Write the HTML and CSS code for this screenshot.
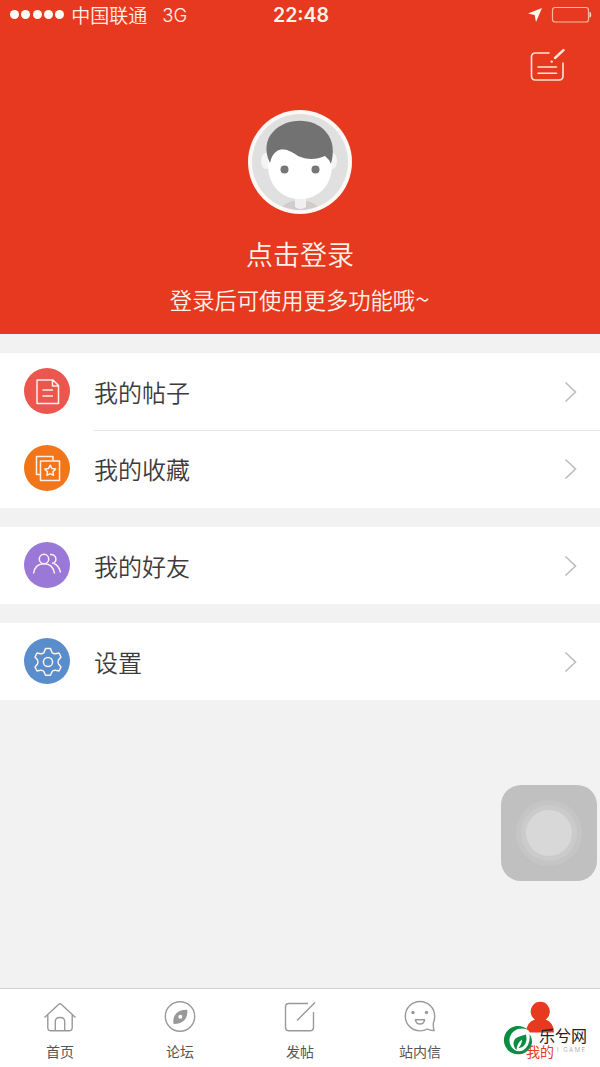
FILE: index.html
```html
<!DOCTYPE html>
<html lang="zh-CN">
<head>
    <meta charset="UTF-8">
    <meta name="viewport" content="width=device-width, initial-scale=1.0">
    <title>我的</title>
    <link rel="stylesheet" href="styles.css">
</head>
<body>

<div class="app">
    <header class="header">
        <div class="status-bar">
            <div class="status-left">
                <div class="signal"><i></i><i></i><i></i><i></i><i></i></div>
                <span class="carrier">中国联通</span>
                <span class="network">3G</span>
            </div>
            <span class="time">22:48</span>
            <div class="status-right">
                <svg width="16" height="16" viewBox="0 0 16 16"><path d="M15 1L9 15L7.6 8L1 6.6Z" fill="#fff8ee"/></svg>
                <svg width="42" height="18" viewBox="0 0 42 18">
                    <rect x="2.5" y="1.5" width="36" height="14.5" rx="2.5" fill="none" stroke="#fcb9a2" stroke-width="1.2"/>
                    <path d="M39.5 6h1q1.5 2.7 0 5.5h-1z" fill="#fddccb"/>
                </svg>
            </div>
        </div>

        <div class="toolbar">
            <svg width="38" height="36" viewBox="0 0 38 36" fill="none" stroke="#ffe5d6" stroke-width="1.6" stroke-linecap="round">
                <path d="M20 5H6.5Q2.500 5 2.500 9V28Q2.500 32 6.500 32H30Q34 32 34 28V15"/>
                <path d="M9 19H27.500M9 25.300H27.500"/>
                <path d="M26 10L34.500 2.200" stroke-width="2.500"/>
                <circle cx="22.700" cy="13.600" r="1.200" fill="#ffe5d6" stroke="none"/>
            </svg>
        </div>

        <div class="avatar">
            <svg width="104" height="104" viewBox="0 0 104 104">
                <defs><clipPath id="face"><circle cx="52" cy="52" r="48"/></clipPath></defs>
                <circle cx="52" cy="52" r="52" fill="#fbf8f6"/>
                <circle cx="52" cy="52" r="48" fill="#e0e0e0"/>
                <g clip-path="url(#face)">
                    <path d="M30 104Q34 92 47 91H57Q70 92 74 104Z" fill="#d3cccc"/>
                    <path d="M47 86H58V97Q52.500 101 47 97Z" fill="#f0f0f0"/>
                    <ellipse cx="18" cy="51" rx="5" ry="8" fill="#f4f4f4"/>
                    <ellipse cx="84" cy="51" rx="5" ry="8" fill="#f4f4f4"/>
                    <path d="M20 40H84V55C84 76 70 89 52 89S20 76 20 55Z" fill="#fff"/>
                    <path d="M22 53C16 41 18 29 25 22C38 7 66 7 78 22C86 31 86 43 83 54Q81 49 77 46C68 50 59 50 50 46C42 41 36 37 29 41Q24 44 22 53Z" fill="#727272"/>
                    <circle cx="36.500" cy="59.500" r="4" fill="#777"/>
                    <circle cx="67.500" cy="59.500" r="4" fill="#777"/>
                </g>
            </svg>
        </div>
        <div class="login">点击登录</div>
        <div class="login-tip">登录后可使用更多功能哦<span class="tilde">~</span></div>
    </header>

    <main class="menu">
        <section class="group">
            <a class="row">
                <svg class="row-icon red" viewBox="0 0 46 46">
                    <path d="M13 12H29L34.500 17.500V35.500H13ZM28.500 12V18H34.500M18.500 22H29M18.500 28H29"/>
                </svg>
                <span class="row-label">我的帖子</span>
                <svg class="arrow" viewBox="0 0 14 22"><path d="M1.500 1.500L11.500 11L1.500 20.500"/></svg>
            </a>
            <a class="row line">
                <svg class="row-icon orange" viewBox="0 0 46 46">
                    <path d="M16.500 29.500H12.500V11.500H29V15M16.500 16H35.500V35.500H16.500Z"/>
                    <path d="M26.200 20.200L27.900 23.600L31.600 24.100L28.900 26.700L29.500 30.400L26.200 28.700L22.900 30.400L23.500 26.700L20.800 24.100L24.500 23.600Z"/>
                </svg>
                <span class="row-label">我的收藏</span>
                <svg class="arrow" viewBox="0 0 14 22"><path d="M1.500 1.500L11.500 11L1.500 20.500"/></svg>
            </a>
        </section>
        <section class="group">
            <a class="row">
                <svg class="row-icon purple" viewBox="0 0 46 46">
                    <circle cx="20" cy="17" r="4.700"/>
                    <path d="M9.500 31.500C10.500 25 14 21.700 20 21.700S29.500 25 30.500 31.500M26 12.500C33.500 11.500 33.500 21.500 28 21.300M30 21.500Q35 23.500 36.500 30.500"/>
                </svg>
                <span class="row-label">我的好友</span>
                <svg class="arrow" viewBox="0 0 14 22"><path d="M1.500 1.500L11.500 11L1.500 20.500"/></svg>
            </a>
        </section>
        <section class="group">
            <a class="row">
                <svg class="row-icon blue" viewBox="0 0 46 46">
                    <circle cx="24" cy="24" r="4.600"/>
                    <path d="M21.500 10.500H26.500L28 14.500Q30 16.500 32.500 15.500L35 15L37 19L34.500 22Q33.500 24 34.500 26L37 29L35 33L31.500 32.300Q29 32 28 33.800L26.500 37.300H21.500L20 33.800Q19 32 16.500 32.300L13 33L11 29L13.500 26Q14.500 24 13.500 22L11 19L13 15L15.500 15.500Q18 16.500 20 14.500Z"/>
                </svg>
                <span class="row-label">设置</span>
                <svg class="arrow" viewBox="0 0 14 22"><path d="M1.500 1.500L11.500 11L1.500 20.500"/></svg>
            </a>
        </section>
    </main>

    <nav class="tabs">
        <a class="tab">
            <svg class="tab-icon" viewBox="0 0 40 36">
                <path d="M4.500 18.500L18.800 5.200Q20 4.200 21.200 5.200L35.500 18.500M7.800 16V28.500Q7.800 31.800 11 31.800H29Q32.200 31.800 32.200 28.500V16M15.300 31.500V22.500Q15.300 18.500 20 18.500T24.700 22.500V31.500"/>
            </svg>
            <span>首页</span>
        </a>
        <a class="tab">
            <svg class="tab-icon" viewBox="0 0 40 36">
                <circle cx="20" cy="17.500" r="14.700"/>
                <path d="M27.300 10.800Q28 17 24.500 21T13.500 25Q12.500 18.500 16.200 14.500T27.300 10.800Z" fill="#999" stroke="none"/>
                <circle cx="20.300" cy="17.800" r="2" fill="#fff" stroke="none"/>
            </svg>
            <span>论坛</span>
        </a>
        <a class="tab">
            <svg class="tab-icon" viewBox="0 0 40 36">
                <path d="M28 4.500H9Q5.500 4.500 5.500 8V28Q5.500 31.800 9 31.800H30Q33.500 31.800 33.500 28V13M17 21.500L35 3.500"/>
            </svg>
            <span>发帖</span>
        </a>
        <a class="tab">
            <svg class="tab-icon" viewBox="0 0 40 36">
                <path d="M33.500 23.500Q34.700 20.500 34.700 17.200A14.700 14.700 0 1 0 20 31.900Q24 31.900 27.500 30Q30 31.600 34 31.500Q33 27 33.500 23.500Z"/>
                <path d="M15.500 20.800H24.500Q24 25 20 25T15.500 20.800Z"/>
                <circle cx="13" cy="13.500" r="1.700" fill="#999" stroke="none"/>
                <circle cx="26.500" cy="13.500" r="1.700" fill="#999" stroke="none"/>
            </svg>
            <span>站内信</span>
        </a>
        <a class="tab active">
            <svg class="tab-icon" viewBox="0 0 40 36">
                <path d="M15 20.500A9.600 9.600 0 1 1 25.500 20.500Q33.500 23 34 33.500H6Q6.500 23 15 20.500Z" fill="#e7391f" stroke="none"/>
            </svg>
            <span>我的</span>
        </a>
    </nav>

    <div class="assistive"><div class="ring"><div class="dot"></div></div></div>

    <div class="watermark">
        <svg width="30" height="30" viewBox="0 0 30 30">
            <circle cx="15" cy="15" r="14" fill="#fff"/>
            <path d="M25 5A14.200 14.200 0 1 0 29 18Q29 12 26.500 9Q28 20 20 25.500Q13 28 8.500 22Q4 15 9 8Q16 1 25 5Z" fill="#0b8c43"/>
            <path d="M13.500 25C9.500 21 9.500 15 14 12.500Q17 11 23 9.500Q24.500 16 21.500 20Q19 23.500 15.500 23Q19 19 19 14.500Q14 18 13.500 25Z" fill="#0b8c43"/>
        </svg>
        <div class="mark-text">
            <b>乐兮网</b>
            <small>I GAME</small>
        </div>
    </div>
</div>

</body>
</html>
```
FILE: styles.css
```css
body {
    margin: 0;
    font-family: "Noto Sans CJK SC", sans-serif;
    font-weight: 350;
    background: #f2f2f2;
}

.app {
    position: relative;
    display: flex;
    flex-direction: column;
    width: 600px;
    height: 1067px;
    overflow: hidden;
}

svg {
    display: block;
    flex-shrink: 0;
}

/* header */
.header {
    height: 334px;
    display: flex;
    flex-direction: column;
    align-items: center;
    background: #e7391f;
    color: #fff3ea;
}

.status-bar {
    display: grid;
    grid-template-columns: 1fr auto 1fr;
    align-items: center;
    width: 100%;
    height: 29px;
    box-sizing: border-box;
    padding: 0 8px 0 10px;
}

.status-left,
.status-right {
    display: flex;
    align-items: center;
}

.status-right {
    justify-content: flex-end;
    gap: 7px;
}

.signal {
    display: flex;
    gap: 2.3px;
    margin-right: 7px;
}

.signal i {
    width: 9px;
    height: 9px;
    border-radius: 50%;
    background: #fffdf8;
}

.carrier {
    font-size: 19px;
    line-height: 28px;
}

.network {
    margin-left: 15px;
    font-family: Inter, sans-serif;
    font-size: 18.5px;
}

.time {
    font-family: Inter, sans-serif;
    font-size: 19.5px;
    font-weight: 600;
}

.toolbar {
    display: flex;
    justify-content: flex-end;
    width: 100%;
    height: 81px;
    box-sizing: border-box;
    padding: 19px 33px 0 0;
}

.avatar {
    width: 104px;
    height: 104px;
}

.login {
    margin-top: 20px;
    font-size: 27px;
    line-height: 40px;
}

.login-tip {
    margin-top: 9px;
    font-size: 22.3px;
    line-height: 32px;
}

.tilde {
    display: inline-block;
    width: 15px;
    font-size: 26px;
    line-height: 20px;
}

/* menu */
.menu {
    flex: 1;
    display: flex;
    flex-direction: column;
    gap: 19px;
    padding-top: 19px;
}

.group {
    background: #fff;
}

.group:first-child {
    padding-bottom: 1px;
}

.row {
    position: relative;
    display: flex;
    align-items: center;
    height: 77px;
    box-sizing: border-box;
    padding: 0 22px 0 24px;
}

.row.line::before {
    content: "";
    position: absolute;
    left: 94px;
    right: 0;
    top: 0;
    height: 1px;
    background: #e6e6e6;
}

.row-icon {
    width: 46px;
    height: 46px;
    margin-bottom: 2px;
    border-radius: 50%;
    fill: none;
    stroke: #fff0ea;
    stroke-width: 1.5;
    stroke-linejoin: round;
}

.red { background: #eb564f; }
.orange { background: #f27519; }
.purple { background: #9a78d8; }
.blue { background: #5a8dcc; }

.row-label {
    flex: 1;
    margin-left: 24px;
    font-size: 24px;
    line-height: 36px;
    color: #3c3c3c;
}

.arrow {
    width: 14px;
    height: 22px;
    margin-top: 1px;
    fill: none;
    stroke: #bdbdbd;
    stroke-width: 1.6;
}

/* tab bar */
.tabs {
    display: flex;
    height: 78px;
    border-top: 1px solid #d2d2d2;
    background: #fff;
}

.tab {
    flex: 1;
    display: flex;
    flex-direction: column;
    align-items: center;
    padding-top: 10px;
    font-size: 14px;
    font-weight: 400;
    line-height: 20px;
    color: #555;
}

.tab-icon {
    width: 40px;
    height: 36px;
    margin-bottom: 6px;
    fill: none;
    stroke: #999;
    stroke-width: 1.4;
}

.tab.active {
    color: #e7391f;
}

/* floating touch button */
.assistive {
    position: absolute;
    left: 501px;
    top: 785px;
    display: flex;
    align-items: center;
    justify-content: center;
    width: 96px;
    height: 96px;
    border-radius: 20px;
    background: #c0c0c0;
}

.ring {
    padding: 5px;
    border-radius: 50%;
    background: #cbcbcb;
    box-shadow: 0 0 0 5px #c5c5c5;
}

.dot {
    width: 46px;
    height: 46px;
    border-radius: 50%;
    background: #d8d8d8;
}

.watermark {
    position: absolute;
    left: 503px;
    top: 1025px;
    display: flex;
    gap: 6px;
}

.mark-text {
    display: flex;
    flex-direction: column;
}

.mark-text b {
    font-size: 16px;
    font-weight: 400;
    line-height: 20px;
    color: #222;
}

.mark-text small {
    margin: 0 0 0 18px;
    font-family: Inter, sans-serif;
    font-size: 6px;
    line-height: 9px;
    letter-spacing: 1.5px;
    color: #999;
}
```
